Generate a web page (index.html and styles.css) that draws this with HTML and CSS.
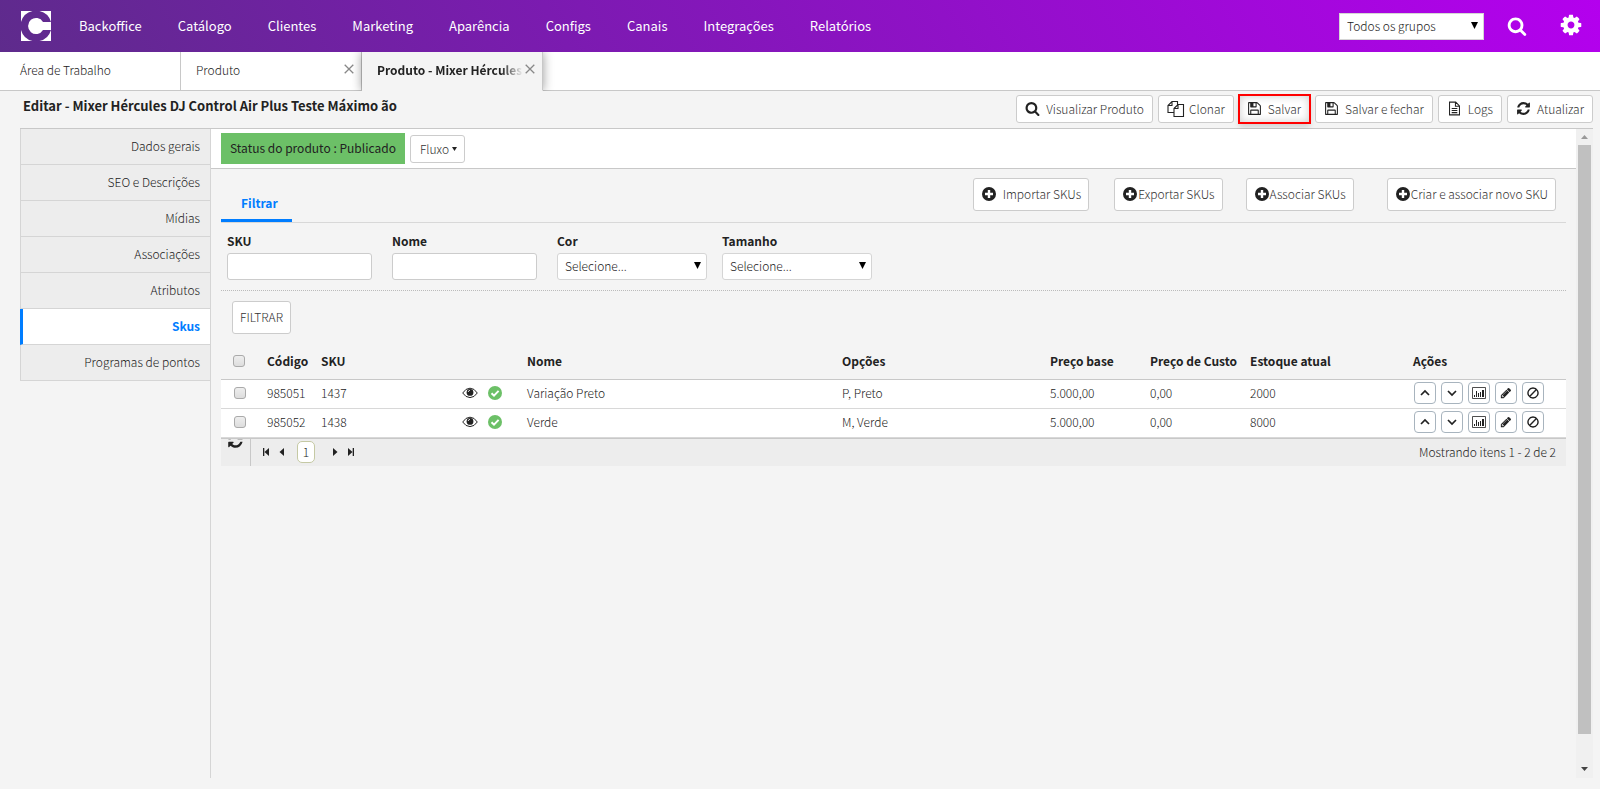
FILE: index.html
```html
<!DOCTYPE html>
<html lang="pt-br">
<head>
    <meta charset="utf-8">
    <title>Produto - Mixer Hércules</title>
    <link rel="stylesheet" href="styles.css">
</head>
<body>
    <!-- Ícones -->
    <svg class="sprite">
        <symbol id="i-search" viewBox="0 0 1792 1792"><path d="M1216 832q0-185-131.500-316.500t-316.500-131.500-316.500 131.500-131.500 316.500 131.500 316.500 316.500 131.500 316.500-131.500 131.500-316.500zm512 832q0 52-38 90t-90 38q-54 0-90-38l-343-342q-179 124-399 124-143 0-273.500-55.500t-225-150-150-225-55.500-273.500 55.500-273.500 150-225 225-150 273.500-55.500 273.500 55.500 225 150 150 225 55.500 273.500q0 220-124 399l343 343q37 37 37 90z"/></symbol>
        <symbol id="i-cog" viewBox="0 0 1792 1792"><path d="M1152 896q0-106-75-181t-181-75-181 75-75 181 75 181 181 75 181-75 75-181zm512-109v222q0 12-8 23t-20 13l-185 28q-19 54-39 91 35 50 107 138 10 12 10 25t-9 23q-27 37-99 108t-94 71q-12 0-26-9l-138-108q-44 23-91 38-16 136-29 186-7 28-36 28h-222q-14 0-24.500-8.500t-11.500-21.500l-28-184q-49-16-90-37l-141 107q-10 9-25 9-14 0-25-11-126-114-165-168-7-10-7-23 0-12 8-23 15-21 51-66.500t54-70.500q-27-50-41-99l-183-27q-13-2-21-12.500t-8-23.500v-222q0-12 8-23t19-13l186-28q14-46 39-92-40-57-107-138-10-12-10-24 0-10 9-23 26-36 98.500-107.500t94.500-71.500q13 0 26 10l138 107q44-23 91-38 16-136 29-186 7-28 36-28h222q14 0 24.500 8.500t11.500 21.500l28 184q49 16 90 37l142-107q9-9 24-9 13 0 25 10 129 119 165 170 7 8 7 22 0 12-8 23-15 21-51 66.500t-54 70.500q26 50 41 98l183 28q13 2 21 12.500t8 23.500z"/></symbol>
        <symbol id="i-save" viewBox="0 0 1792 1792"><path d="M512 1536h768v-384h-768v384zm896 0h128v-896q0-14-10-38.500t-20-34.500l-281-281q-10-10-34-20t-39-10v416q0 40-28 68t-68 28h-576q-40 0-68-28t-28-68v-416h-128v1280h128v-416q0-40 28-68t68-28h832q40 0 68 28t28 68v416zm-384-928v-320q0-13-9.500-22.500t-22.500-9.500h-192q-13 0-22.500 9.500t-9.500 22.500v320q0 13 9.500 22.500t22.500 9.500h192q13 0 22.500-9.500t9.500-22.500zm640 32v928q0 40-28 68t-68 28h-1344q-40 0-68-28t-28-68v-1344q0-40 28-68t68-28h928q40 0 88 20t76 48l280 280q28 28 48 76t20 88z"/></symbol>
        <symbol id="i-refresh" viewBox="0 0 1792 1792"><path d="M1639 1056q0 5-1 7-64 268-268 434.500t-478 166.500q-146 0-282.500-55t-243.500-157l-129 129q-19 19-45 19t-45-19-19-45v-448q0-26 19-45t45-19h448q26 0 45 19t19 45-19 45l-137 137q71 66 161 102t187 36q134 0 250-65t186-179q11-17 53-117 8-23 30-23h192q13 0 22.500 9.500t9.500 22.500zm25-800v448q0 26-19 45t-45 19h-448q-26 0-45-19t-19-45 19-45l138-138q-148-137-349-137-134 0-250 65t-186 179q-11 17-53 117-8 23-30 23h-199q-13 0-22.500-9.500t-9.500-22.500v-7q65-268 270-434.500t480-166.500q146 0 284 55.500t245 156.500l130-129q19-19 45-19t45 19 19 45z"/></symbol>
        <symbol id="i-pencil" viewBox="0 0 1792 1792"><path d="M491 1536l91-91-235-235-91 91v107h128v128h107zm523-928q0-22-22-22-10 0-17 7l-542 542q-7 7-7 17 0 22 22 22 10 0 17-7l542-542q7-7 7-17zm-54-192l416 416-832 832h-416v-416zm683 96q0 53-37 90l-166 166-416-416 166-165q36-38 90-38 53 0 91 38l235 234q37 39 37 91z"/></symbol>
        <symbol id="i-check" viewBox="0 0 14 14"><circle cx="7" cy="7" r="7"/><path d="M3.500 7.200l2.500 2.400 4.600-4.700" fill="none" stroke="#fff" stroke-width="2"/></symbol>
        <symbol id="i-plus" viewBox="0 0 14 14"><circle cx="7" cy="7" r="7"/><path d="M7 3v8M3 7h8" stroke="#fff" stroke-width="2.400"/></symbol>
        <symbol id="i-copy" viewBox="0 0 18 18"><path d="M6.500 12.500h-5.500v-7l4-4h5.500v3.500M5 1.500v4h-4M7 8.500l4-4h5.500v12h-9.500zM11 4.500v4h-4" fill="none" stroke="currentColor" stroke-width="1.100"/></symbol>
        <symbol id="i-file" viewBox="0 0 14 16"><path d="M1.700 1.200h6.600l4 4v9.600h-10.600zM8 1.200v4.300h4.300M4 8h6M4 10.200h6M4 12.400h6" fill="none" stroke="currentColor" stroke-width="1.100"/></symbol>
        <symbol id="i-eye" viewBox="0 0 16 12"><path d="M.7 6q3-4.800 7.300-4.800t7.300 4.800q-3 4.600-7.300 4.600t-7.300-4.600z" fill="none" stroke="currentColor"/><circle cx="8" cy="5.400" r="3.400"/><path d="M6.200 5q.2-1.500 1.800-1.700" fill="none" stroke="#fff" stroke-width=".8"/></symbol>
        <symbol id="i-up" viewBox="0 0 12 12"><path d="M2 8l4-4 4 4" fill="none" stroke="currentColor" stroke-width="1.700"/></symbol>
        <symbol id="i-down" viewBox="0 0 12 12"><path d="M2 4l4 4 4-4" fill="none" stroke="currentColor" stroke-width="1.700"/></symbol>
        <symbol id="i-chart" viewBox="0 0 14 12"><path d="M.5.500h13v11h-13z" fill="none" stroke="currentColor" stroke-width=".8"/><path d="M2 8h1v2h-1zM4 4h1v6h-1zM6 6h1v4h-1zM8 5h1v5h-1zM10 3h2v7h-2z"/></symbol>
        <symbol id="i-ban" viewBox="0 0 12 12"><path d="M6 1a5 5 0 1 0 .01 0zM2.600 9.400l6.800-6.800" fill="none" stroke="currentColor" stroke-width="1.400"/></symbol>
        <symbol id="i-close" viewBox="0 0 10 10"><path d="M.7.700l8.600 8.600M9.300.700l-8.600 8.600" fill="none" stroke="currentColor" stroke-width="1.300"/></symbol>
        <symbol id="i-first" viewBox="0 0 8 10"><path d="M1 1h1.300v8h-1.300zM7 1v8l-4.500-4z"/></symbol>
        <symbol id="i-prev" viewBox="0 0 8 10"><path d="M6 1v8l-4.500-4z"/></symbol>
        <symbol id="i-next" viewBox="0 0 8 10"><path d="M2 1v8l4.500-4z"/></symbol>
        <symbol id="i-last" viewBox="0 0 8 10"><path d="M5.700 1h1.300v8h-1.300zM1 1v8l4.500-4z"/></symbol>
        <symbol id="i-caret" viewBox="0 0 8 8" preserveAspectRatio="none"><path d="M0 0h8l-4 8z"/></symbol>
    </svg>

    <header class="topbar">
        <a href="#" class="logo" aria-label="Início">
            <svg viewBox="0 0 30 30"><path d="M0 0h11.500a15.500 15.500 0 0 0-11.500 11zM30 0h-11.500a15.500 15.500 0 0 1 11.500 11zM0 30h11.500a15.500 15.500 0 0 1-11.500-11zM30 30h-11.500a15.500 15.500 0 0 0 11.500-11z"/><path d="M30 11v8h-8a8 8 0 1 1 0-8z"/></svg>
        </a>
        <nav class="menu">
            <a href="#">Backoffice</a>
            <a href="#">Catálogo</a>
            <a href="#">Clientes</a>
            <a href="#">Marketing</a>
            <a href="#">Aparência</a>
            <a href="#">Configs</a>
            <a href="#">Canais</a>
            <a href="#">Integrações</a>
            <a href="#">Relatórios</a>
        </nav>
        <div class="select group-select">
            <select aria-label="Grupo"><option>Todos os grupos</option></select>
            <svg><use href="#i-caret"/></svg>
        </div>
        <button class="top-icon" aria-label="Buscar"><svg><use href="#i-search"/></svg></button>
        <button class="top-icon cog" aria-label="Configurações"><svg><use href="#i-cog"/></svg></button>
    </header>

    <div class="tabs">
        <div class="tab"><a href="#">Área de Trabalho</a></div>
        <div class="tab"><a href="#">Produto</a><button aria-label="Fechar"><svg><use href="#i-close"/></svg></button></div>
        <div class="tab active"><a href="#">Produto - Mixer Hércules</a><button aria-label="Fechar"><svg><use href="#i-close"/></svg></button></div>
        <div class="tabs-rest"></div>
    </div>

    <div class="page-head">
        <h1>Editar - Mixer Hércules DJ Control Air Plus Teste Máximo ão</h1>
        <div class="toolbar">
            <button class="btn"><svg><use href="#i-search"/></svg>Visualizar Produto</button>
            <button class="btn clone"><svg><use href="#i-copy"/></svg>Clonar</button>
            <button class="btn highlight"><svg><use href="#i-save"/></svg>Salvar</button>
            <button class="btn"><svg><use href="#i-save"/></svg>Salvar e fechar</button>
            <button class="btn"><svg><use href="#i-file"/></svg>Logs</button>
            <button class="btn"><svg><use href="#i-refresh"/></svg>Atualizar</button>
        </div>
    </div>

    <div class="main">
        <nav class="sidebar">
            <a href="#">Dados gerais</a>
            <a href="#">SEO e Descrições</a>
            <a href="#">Mídias</a>
            <a href="#">Associações</a>
            <a href="#">Atributos</a>
            <a href="#" class="active">Skus</a>
            <a href="#">Programas de pontos</a>
        </nav>

        <div class="content">
            <div class="status-bar">
                <span class="status">Status do produto : Publicado</span>
                <button class="btn fluxo">Fluxo<svg><use href="#i-caret"/></svg></button>
            </div>

            <div class="panel">
                <div class="panel-head">
                    <a href="#" class="panel-tab">Filtrar</a>
                    <div class="sku-actions">
                        <button class="btn import"><svg><use href="#i-plus"/></svg>Importar SKUs</button>
                        <button class="btn export"><svg><use href="#i-plus"/></svg>Exportar SKUs</button>
                        <button class="btn assoc"><svg><use href="#i-plus"/></svg>Associar SKUs</button>
                        <button class="btn"><svg><use href="#i-plus"/></svg>Criar e associar novo SKU</button>
                    </div>
                </div>

                <div class="filters">
                    <div class="field">
                        <label for="sku">SKU</label>
                        <input type="text" id="sku">
                    </div>
                    <div class="field">
                        <label for="nome">Nome</label>
                        <input type="text" id="nome">
                    </div>
                    <div class="field">
                        <label for="cor">Cor</label>
                        <div class="select">
                            <select id="cor"><option>Selecione...</option></select>
                            <svg><use href="#i-caret"/></svg>
                        </div>
                    </div>
                    <div class="field">
                        <label for="tamanho">Tamanho</label>
                        <div class="select">
                            <select id="tamanho"><option>Selecione...</option></select>
                            <svg><use href="#i-caret"/></svg>
                        </div>
                    </div>
                </div>
                <button class="btn btn-filter">FILTRAR</button>

                <table class="grid">
                    <colgroup>
                        <col class="c-check"><col class="c-code"><col class="c-sku"><col class="c-state"><col class="c-name"><col class="c-options"><col class="c-price"><col class="c-price"><col class="c-stock"><col class="c-actions">
                    </colgroup>
                    <thead>
                        <tr>
                            <th><input type="checkbox" aria-label="Selecionar todos"></th>
                            <th>Código</th>
                            <th>SKU</th>
                            <th></th>
                            <th>Nome</th>
                            <th>Opções</th>
                            <th>Preço base</th>
                            <th>Preço de Custo</th>
                            <th>Estoque atual</th>
                            <th>Ações</th>
                        </tr>
                    </thead>
                    <tbody>
                        <tr>
                            <td><input type="checkbox" aria-label="Selecionar 985051"></td>
                            <td>985051</td>
                            <td>1437</td>
                            <td><div class="state"><svg class="eye"><use href="#i-eye"/></svg><svg class="ok"><use href="#i-check"/></svg></div></td>
                            <td>Variação Preto</td>
                            <td>P, Preto</td>
                            <td>5.000,00</td>
                            <td>0,00</td>
                            <td>2000</td>
                            <td>
                                <div class="actions">
                                    <button aria-label="Subir"><svg><use href="#i-up"/></svg></button>
                                    <button aria-label="Descer"><svg><use href="#i-down"/></svg></button>
                                    <button aria-label="Estoque"><svg class="wide"><use href="#i-chart"/></svg></button>
                                    <button aria-label="Editar"><svg><use href="#i-pencil"/></svg></button>
                                    <button aria-label="Desativar"><svg><use href="#i-ban"/></svg></button>
                                </div>
                            </td>
                        </tr>
                        <tr>
                            <td><input type="checkbox" aria-label="Selecionar 985052"></td>
                            <td>985052</td>
                            <td>1438</td>
                            <td><div class="state"><svg class="eye"><use href="#i-eye"/></svg><svg class="ok"><use href="#i-check"/></svg></div></td>
                            <td>Verde</td>
                            <td>M, Verde</td>
                            <td>5.000,00</td>
                            <td>0,00</td>
                            <td>8000</td>
                            <td>
                                <div class="actions">
                                    <button aria-label="Subir"><svg><use href="#i-up"/></svg></button>
                                    <button aria-label="Descer"><svg><use href="#i-down"/></svg></button>
                                    <button aria-label="Estoque"><svg class="wide"><use href="#i-chart"/></svg></button>
                                    <button aria-label="Editar"><svg><use href="#i-pencil"/></svg></button>
                                    <button aria-label="Desativar"><svg><use href="#i-ban"/></svg></button>
                                </div>
                            </td>
                        </tr>
                    </tbody>
                </table>

                <div class="pager">
                    <button class="pager-refresh" aria-label="Recarregar"><svg><use href="#i-refresh"/></svg></button>
                    <div class="pager-nav">
                        <button aria-label="Primeira"><svg><use href="#i-first"/></svg></button>
                        <button aria-label="Anterior"><svg><use href="#i-prev"/></svg></button>
                        <button class="page">1</button>
                        <button aria-label="Próxima"><svg><use href="#i-next"/></svg></button>
                        <button aria-label="Última"><svg><use href="#i-last"/></svg></button>
                    </div>
                    <span class="pager-info">Mostrando itens 1 - 2 de 2</span>
                </div>
            </div>
        </div>

        <div class="scrollbar">
            <svg class="arrow-up"><use href="#i-caret"/></svg>
            <div class="thumb"></div>
            <svg class="arrow-down"><use href="#i-caret"/></svg>
        </div>
    </div>
</body>
</html>
```
FILE: styles.css
```css
* {
    box-sizing: border-box;
}
body {
    margin: 0;
    min-height: 100vh;
    display: flex;
    flex-direction: column;
    background: #f4f4f4;
    color: #222;
    font-family: "Noto Sans CJK JP", "Open Sans", sans-serif;
    font-size: 12px;
    font-weight: 300;
    line-height: 20px;
}
a {
    color: inherit;
    text-decoration: none;
}
button, input, select {
    font: inherit;
    color: inherit;
}
button {
    padding: 0;
    border: none;
    background: none;
    cursor: pointer;
}
svg {
    display: block;
    flex: none;
    fill: currentColor;
}
.sprite {
    position: absolute;
    width: 0;
    height: 0;
}

/* Barra superior */
.topbar {
    display: flex;
    align-items: center;
    height: 52px;
    padding: 0 20px 0 21px;
    background: linear-gradient(60deg, #5e2b8c, #7b1bb0 35%, #b400ee);
    color: #fff;
}
.logo svg {
    width: 30px;
    height: 30px;
}
.menu {
    display: flex;
    flex: 1;
    gap: 36px;
    margin-left: 28px;
    font-size: 13px;
    font-weight: 400;
}
.select {
    position: relative;
    width: 150px;
}
.select select {
    display: block;
    width: 100%;
    height: 27px;
    padding: 0 7px 1px;
    border: 1px solid #d5d5d5;
    border-radius: 3px;
    background: #fff;
    color: #222;
    appearance: none;
}
.select svg {
    position: absolute;
    right: 6px;
    top: 9px;
    width: 7px;
    height: 7px;
    color: #000;
}
.group-select {
    width: 145px;
}
.group-select select {
    border-radius: 0;
}
.top-icon {
    margin-left: 23px;
}
.top-icon.cog {
    margin-left: 32px;
}
.top-icon svg {
    width: 20px;
    height: 20px;
}
.top-icon.cog svg {
    width: 24px;
    height: 24px;
    margin: -2px -3px 0 0;
}

/* Abas */
.tabs {
    display: flex;
    height: 39px;
    background: #fff;
}
.tab {
    display: flex;
    align-items: center;
    width: 181px;
    padding: 0 7px 2px 15px;
    border-right: 1px solid #c8c8c8;
    border-bottom: 1px solid #c8c8c8;
}
.tab:first-child {
    padding-left: 20px;
}
.tab a {
    flex: 1;
    min-width: 0;
    white-space: nowrap;
}
.tab button {
    color: #888;
    margin: 0 0 2px 2px;
}
.tab button svg {
    width: 10px;
    height: 10px;
}
.tab.active {
    background: #f4f4f4;
    border-bottom-color: #f4f4f4;
    font-weight: 700;
    box-shadow: 0 0 10px rgba(0,0,0,0.4);
    clip-path: inset(0 -12px);
}
.tab.active a {
    mask-image: linear-gradient(to right, #000 85%, transparent);
}
.tabs-rest {
    flex: 1;
    border-bottom: 1px solid #c8c8c8;
}

/* Titulo e botoes */
.page-head {
    display: flex;
    justify-content: space-between;
    height: 38px;
    margin: 0 7px 0 20px;
    border-bottom: 1px solid #c8c8c8;
}
h1 {
    margin: 5px 3px;
    font-size: 13px;
    font-weight: 700;
    line-height: 20px;
}
.toolbar {
    display: flex;
    align-items: center;
    gap: 5px;
    padding-bottom: 2px;
}
.btn {
    display: flex;
    align-items: center;
    justify-content: center;
    gap: 6px;
    height: 28px;
    padding: 0 8px;
    border: 1px solid #ccc;
    border-radius: 3px;
    background: #fff;
    color: #333;
    white-space: nowrap;
}
.btn svg {
    width: 15px;
    height: 15px;
    color: #222;
}
.btn.clone svg {
    width: 18px;
    height: 18px;
}
.btn.clone {
    gap: 4px;
}
.btn.highlight {
    padding: 0 8px 0 7px;
    border-radius: 0;
    outline: 2px solid #f00;
    outline-offset: -1px;
    box-shadow: inset 0 0 8px rgba(0,0,0,0.2), 0 4px 6px rgba(0,0,0,0.15);
}

/* Corpo */
.main {
    display: flex;
    flex: 1;
    margin: 0 7px 11px 20px;
}
.sidebar {
    width: 191px;
    border-right: 1px solid #d5d5d5;
    text-align: right;
}
.sidebar a {
    display: block;
    height: 36px;
    padding: 7px 10px;
    border-left: 1px solid #d5d5d5;
    border-bottom: 1px solid #d5d5d5;
    background: #ededed;
}
.sidebar a.active {
    border-left: 3px solid #007dff;
    background: #fff;
    color: #007dff;
    font-weight: 700;
}
.content {
    flex: 1;
    min-width: 0;
}
.status-bar {
    display: flex;
    align-items: center;
    gap: 5px;
    height: 40px;
    padding: 0 10px;
    border-bottom: 1px solid #c8c8c8;
    background: #fff;
}
.status {
    padding: 5px 9px 6px;
    background: #6cc067;
    font-weight: 400;
}
.btn.fluxo {
    gap: 3px;
    padding: 0 7px 0 9px;
}
.btn.fluxo svg {
    width: 5px;
    height: 4px;
}
.panel {
    padding: 0 10px;
}
.panel-head {
    display: flex;
    justify-content: space-between;
    align-items: flex-end;
    height: 54px;
    border-bottom: 1px solid #d8d8d8;
}
.panel-tab {
    padding: 0 14px 6px 20px;
    border-bottom: 3px solid #007dff;
    color: #007dff;
    font-weight: 700;
}
.sku-actions {
    display: flex;
    padding: 0 10px 11px 0;
}
.sku-actions .btn {
    height: 33px;
    gap: 1px;
    padding: 0 7px 1px 8px;
}
.sku-actions .btn.import {
    gap: 7px;
    margin-right: 25px;
}
.sku-actions .export {
    margin-right: 23px;
}
.sku-actions .assoc {
    margin-right: 33px;
}
.sku-actions .btn svg {
    width: 14px;
    height: 14px;
}

/* Filtros */
.filters {
    display: flex;
    padding: 8px 6px 10px;
    border-bottom: 1px dotted #bbb;
}
.field {
    width: 165px;
}
.field label {
    display: block;
    margin-bottom: 2px;
    font-weight: 700;
}
.field input {
    display: block;
    width: 145px;
    height: 27px;
    padding: 0 8px;
    border: 1px solid #ccc;
    border-radius: 3px;
    background: #fff;
}
.btn.btn-filter {
    height: 33px;
    margin: 10px 10px 9px 11px;
    padding: 0 7px 1px;
}

/* Grade */
.grid {
    width: 100%;
    table-layout: fixed;
    border-collapse: collapse;
}
.c-check { width: 46px; }
.c-code { width: 54px; }
.c-sku { width: 141px; }
.c-state { width: 65px; }
.c-options { width: 208px; }
.c-price { width: 100px; }
.c-stock { width: 163px; }
.c-actions { width: 153px; }
.grid th {
    height: 36px;
    padding: 0;
    border-bottom: 1px solid #c8c8c8;
    font-weight: 700;
    text-align: left;
    white-space: nowrap;
}
.grid td {
    height: 29px;
    padding: 0 0 1px;
    border-bottom: 1px solid #d8d8d8;
    background: #fff;
}
.grid input {
    display: block;
    width: 12px;
    height: 12px;
    margin: 0 0 0 12px;
    border: 1px solid #aaa;
    border-radius: 3px;
    background: linear-gradient(#eee, #ddd);
    appearance: none;
}
.grid td input {
    margin-left: 13px;
}
.state {
    display: flex;
    align-items: center;
    gap: 10px;
}
.eye {
    width: 16px;
    height: 12px;
}
.ok {
    width: 14px;
    height: 14px;
    color: #6cc067;
}
.actions {
    display: flex;
    gap: 5px;
    padding-left: 1px;
}
.actions button {
    display: flex;
    align-items: center;
    justify-content: center;
    width: 22px;
    height: 22px;
    border: 1px solid #a8b4be;
    border-radius: 4px;
    background: #fff;
}
.actions svg {
    width: 12px;
    height: 12px;
}
.actions svg.wide {
    width: 14px;
}

/* Paginação */
.pager {
    display: flex;
    align-items: center;
    height: 28px;
    padding-right: 10px;
    border-top: 1px solid #c8c8c8;
    background: #ededed;
}
.pager-refresh {
    align-self: stretch;
    display: flex;
    align-items: flex-start;
    width: 30px;
    padding-left: 6px;
    border-right: 1px solid #c8c8c8;
    overflow: hidden;
}
.pager-refresh svg {
    width: 17px;
    height: 17px;
    margin-top: -7px;
}
.pager-nav {
    display: flex;
    flex: 1;
    align-items: center;
    gap: 8px;
    padding-left: 11px;
}
.pager-nav svg {
    width: 8px;
    height: 10px;
}
.pager-nav .page {
    width: 18px;
    height: 22px;
    margin: 0 8px 0 3px;
    border: 1px solid #c5c9a4;
    border-radius: 5px;
    background: #fff;
    line-height: 20px;
}

/* Barra de rolagem */
.scrollbar {
    display: flex;
    flex-direction: column;
    align-items: center;
    width: 17px;
    padding: 6px 0 7px;
    background: #f0f0f0;
}
.scrollbar svg {
    width: 7px;
    height: 4px;
    color: #444;
}
.scrollbar .arrow-up {
    margin-bottom: 6px;
    color: #999;
    transform: rotate(180deg);
}
.thumb {
    flex: 1;
    width: 13px;
    margin-bottom: 33px;
    background: #c0c0c0;
}
```
